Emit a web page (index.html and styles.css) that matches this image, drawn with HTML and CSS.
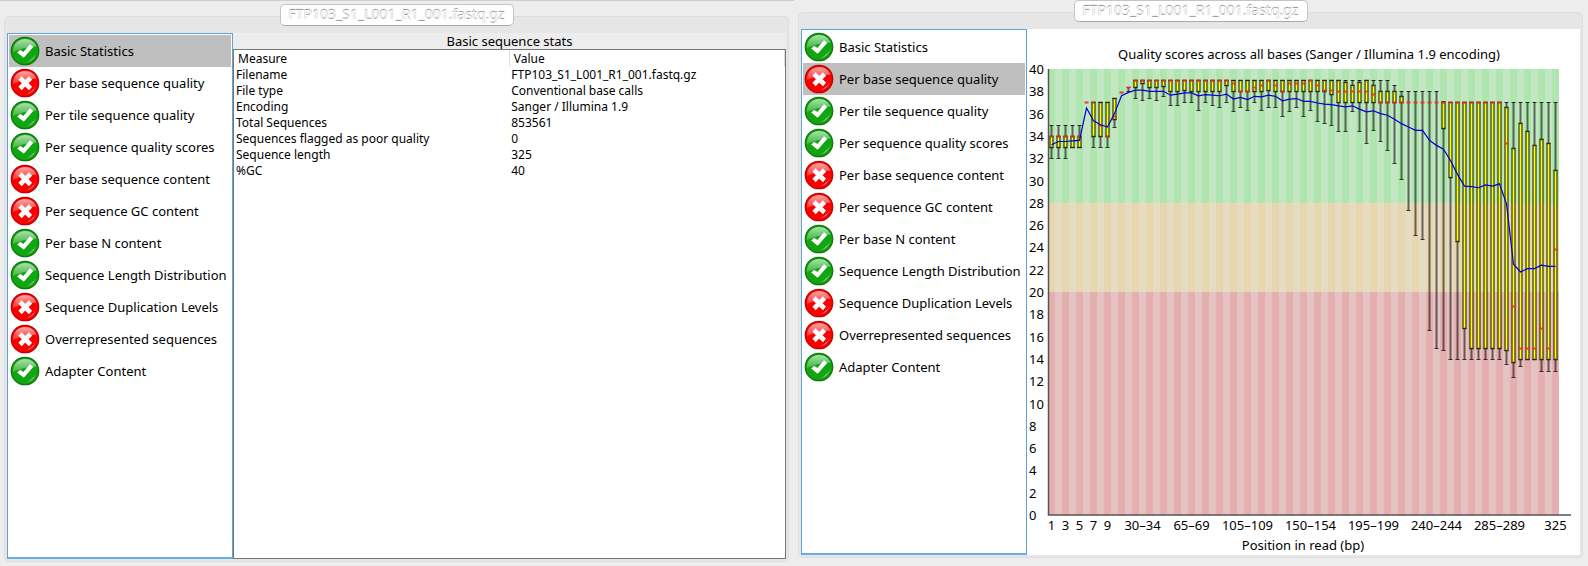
FILE: index.html
```html
<!DOCTYPE html>
<html lang="en">
<head>
<meta charset="utf-8">
<title>FastQC</title>
<link rel="stylesheet" href="styles.css">
</head>
<body>
<svg class="defs" aria-hidden="true">
  <defs>
    <linearGradient id="gloss" x1="0" y1="0" x2="0" y2="1">
      <stop offset="0" stop-color="#fff" stop-opacity=".65"/>
      <stop offset="1" stop-color="#fff" stop-opacity=".2"/>
    </linearGradient>
    <symbol id="pass" viewBox="0 0 30 30">
      <circle cx="15" cy="15" r="13.7" fill="#12a512" stroke="#0c790c" stroke-width="1.3"/>
      <path d="M3 16C3 8 8 3 15 3c6 0 10 3.500 11.500 7.500C17 11 9 13 3 16Z" fill="url(#gloss)"/>
      <path d="M25.700 18c-1.200 4.500-4.500 7.500-9.500 8.200 4.500-1.800 7.500-4.400 9.500-8.200Z" fill="#fff" opacity=".55"/>
      <path d="M7.200 16.500l3-2.800 3.200 2.300 6.600-7.800 3.200 2.700-9.500 10.900Z" fill="#fff"/>
    </symbol>
    <symbol id="fail" viewBox="0 0 30 30">
      <circle cx="15" cy="15" r="13.700" fill="#fb0000" stroke="#c80000" stroke-width="1.300"/>
      <path d="M3 16C3 8 8 3 15 3c6 0 10 3.500 11.500 7.500C17 11 9 13 3 16Z" fill="url(#gloss)"/>
      <path d="M25.700 18c-1.200 4.500-4.500 7.500-9.500 8.200 4.500-1.800 7.500-4.400 9.500-8.200Z" fill="#fff" opacity=".55"/>
      <path d="M10 10l10.500 10.500M20.500 10L10 20.500" stroke="#fff" stroke-width="4.600"/>
    </symbol>
  </defs>
</svg>
<main class="workspace">
  <section class="report">
    <h1 class="tab">FTP103_S1_L001_R1_001.fastq.gz</h1>
    <div class="panes">
      <ul class="modules">
        <li><button class="module selected"><svg><use href="#pass"/></svg>Basic Statistics</button></li>
        <li><button class="module"><svg><use href="#fail"/></svg>Per base sequence quality</button></li>
        <li><button class="module"><svg><use href="#pass"/></svg>Per tile sequence quality</button></li>
        <li><button class="module"><svg><use href="#pass"/></svg>Per sequence quality scores</button></li>
        <li><button class="module"><svg><use href="#fail"/></svg>Per base sequence content</button></li>
        <li><button class="module"><svg><use href="#fail"/></svg>Per sequence GC content</button></li>
        <li><button class="module"><svg><use href="#pass"/></svg>Per base N content</button></li>
        <li><button class="module"><svg><use href="#pass"/></svg>Sequence Length Distribution</button></li>
        <li><button class="module"><svg><use href="#fail"/></svg>Sequence Duplication Levels</button></li>
        <li><button class="module"><svg><use href="#fail"/></svg>Overrepresented sequences</button></li>
        <li><button class="module"><svg><use href="#pass"/></svg>Adapter Content</button></li>
      </ul>
      <div class="stats">
        <h2 class="stats-title">Basic sequence stats</h2>
        <div class="stats-body">
          <table class="stats-table">
            <thead><tr><th>Measure</th><th>Value</th></tr></thead>
            <tbody>
              <tr><td>Filename</td><td>FTP103_S1_L001_R1_001.fastq.gz</td></tr>
              <tr><td>File type</td><td>Conventional base calls</td></tr>
              <tr><td>Encoding</td><td>Sanger / Illumina 1.9</td></tr>
              <tr><td>Total Sequences</td><td>853561</td></tr>
              <tr><td>Sequences flagged as poor quality</td><td>0</td></tr>
              <tr><td>Sequence length</td><td>325</td></tr>
              <tr><td>%GC</td><td>40</td></tr>
            </tbody>
          </table>
        </div>
      </div>
    </div>
  </section>
  <section class="report raised">
    <h1 class="tab">FTP103_S1_L001_R1_001.fastq.gz</h1>
    <div class="panes">
      <ul class="modules">
        <li><button class="module"><svg><use href="#pass"/></svg>Basic Statistics</button></li>
        <li><button class="module selected"><svg><use href="#fail"/></svg>Per base sequence quality</button></li>
        <li><button class="module"><svg><use href="#pass"/></svg>Per tile sequence quality</button></li>
        <li><button class="module"><svg><use href="#pass"/></svg>Per sequence quality scores</button></li>
        <li><button class="module"><svg><use href="#fail"/></svg>Per base sequence content</button></li>
        <li><button class="module"><svg><use href="#fail"/></svg>Per sequence GC content</button></li>
        <li><button class="module"><svg><use href="#pass"/></svg>Per base N content</button></li>
        <li><button class="module"><svg><use href="#pass"/></svg>Sequence Length Distribution</button></li>
        <li><button class="module"><svg><use href="#fail"/></svg>Sequence Duplication Levels</button></li>
        <li><button class="module"><svg><use href="#fail"/></svg>Overrepresented sequences</button></li>
        <li><button class="module"><svg><use href="#pass"/></svg>Adapter Content</button></li>
      </ul>
      <div class="chart">
        <svg id="quality" class="plot" viewBox="0 0 553 526" preserveAspectRatio="xMinYMin meet" role="img" aria-label="Quality scores across all bases"></svg>
      </div>
    </div>
  </section>
</main>
<script src="chart.js"></script>
</body>
</html>
```
FILE: styles.css
```css
* { box-sizing: border-box; }
body {
  margin: 0;
  background: #ededed;
  color: #000;
  font-family: "Noto Sans", "Open Sans", sans-serif;
  font-size: 13px;
}
.defs { position: absolute; width: 0; height: 0; }
.workspace {
  display: flex;
  gap: 9px;
  min-height: 100vh;
  padding: 16px 5px 5px 4px;
  background: linear-gradient(#cfcfcf, #cfcfcf) no-repeat 0 0 / 50% 1px;
}
.report {
  position: relative;
  flex: 1;
  display: flex;
  min-width: 0;
  padding: 16px 2px 2px;
  background: #e6e6e6;
  border: 1px solid #dedede;
  border-radius: 5px;
}
.raised { margin: -4px 0 4px; }
.tab {
  position: absolute;
  top: -13px;
  left: 50%;
  transform: translateX(-50%);
  margin: 0;
  width: 234px;
  height: 22px;
  background: #fff;
  border: 1px solid #c4c4c4;
  border-bottom-color: #aaa;
  border-radius: 5px;
  color: #fff;
  font-size: 14px;
  font-weight: 400;
  line-height: 20px;
  text-align: center;
  text-shadow: 0 -1px 1px #888;
  white-space: nowrap;
}
.panes { flex: 1; display: flex; min-width: 0; }
.modules {
  flex: none;
  width: 226px;
  margin: 0;
  padding: 1px;
  list-style: none;
  background: #fff;
  border: 1px solid #5ca4dd;
  border-bottom: 2px solid #62aeee;
}
.module {
  display: flex;
  align-items: center;
  gap: 5px;
  width: 100%;
  height: 32px;
  padding: 0 0 0 1px;
  border: 0;
  background: none;
  color: inherit;
  font: inherit;
  white-space: nowrap;
}
.module svg { flex: none; width: 30px; height: 30px; }
.selected { background: #bfbfbf; }
.stats { flex: 1; display: flex; flex-direction: column; min-width: 0; }
.stats-title {
  margin: 0;
  background: #ededed;
  font-size: 13px;
  font-weight: 400;
  line-height: 16px;
  text-align: center;
}
.stats-body { flex: 1; background: #fff; border: 1px solid #777; }
.stats-table {
  width: 100%;
  border-collapse: collapse;
  table-layout: fixed;
  font-size: 12px;
  line-height: 16px;
}
.stats-table th { height: 17px; padding: 0 4px; font-weight: 400; text-align: left; }
.stats-table th + th { border-left: 1px solid #ddd; border-right: 1px solid #ddd; }
.stats-table td { padding: 0 2px; }
.chart { flex: 1; min-width: 0; background: #fff; }
.plot { display: block; width: 100%; height: auto; font-size: 13px; }
.plot text { fill: #000; }
.middle { text-anchor: middle; }
```
FILE: chart.js
```js
// Per column: upper whisker, upper quartile, median, lower quartile, lower whisker, mean.
const data = [
  [35,34,34,33,32,33.2],[35,34,34,33,32,33.5],[35,34,34,33,32,33.5],[35,34,34,33,33,33.55],[35,34,34,33,33,33.6],
  [37,37,37,37,37,36.5],[37,37,37,34,33,35.35],[37,37,35,34,33,35],[37,37,34,34,33,34.8],[37.4,37.4,35.8,35.5,34.8,36],
  [37.9,37.9,37.9,37.9,37.9,37.6],[38.4,38.4,38.4,38.4,38,37.9],[39,39,39,38.4,37.4,38.1],[39,39,39,38.75,37.2,38.1],
  [39,39,39,38.4,37.4,38],[39,39,39,38.4,37.2,38],[39,39,39,38.5,37.6,38],[39,39,39,38,36.8,37.65],[39,39,39,38,36.8,37.75],
  [39,39,39,38.1,37,37.85],[39,39,39,38,37,37.85],[39,39,39,38,36.35,37.6],[39,39,39,38,37,37.7],[39,39,39,38,36.8,37.65],
  [39,39,39,38,36.6,37.6],[39,39,39,38.6,37,37.75],[39,39,38.75,38,36.2,37.3],[39,39,38,38,36.6,37.45],[39,39,38,38,36.35,37.25],
  [39,39,38.4,38,37,37.55],[39,39,38.6,38,36.35,37.5],[39,39,39,38.1,36.6,37.65],[39,39,38.6,38,36.6,37.55],[39,39,38,38,35.8,37.15],
  [39,39,38.75,38,36.2,37.3],[39,39,38.75,38,36.6,37.35],[39,39,38.75,38,35.8,37.1],[39,39,39,38,36.35,37.1],[39,39,38.6,38,35.3,36.95],
  [39,39,38.1,38,35.2,36.85],[39,39,38.1,37.8,35,36.8],[39,39,38,37,34.4,36.7],[39,38.8,38,37,34.4,36.6],[39,38.6,38,37,36.2,36.7],
  [39,38.8,38,37,34.4,36.4],[39,39,38,37,33.4,36.15],[39,38.6,37.8,37,34.55,36.25],[39,38,37,37,33.55,36],[39,38,37,37,32.75,35.85],
  [38.6,38,37,37,31.6,35.5],[38,37.6,37,37,30.15,35.1],[38,37,37,37,27.35,34.8],[38,37,37,37,25.1,34.5],[38,37,37,37,24.75,34.5],
  [38,37,37,37,16.6,33.6],[38,37,37,37,15,33.15],[37.15,37,37,34.75,14.8,32.8],[37,37,37,30.3,14,31.8],[37,37,37,24.55,14,30.55],
  [37,37,37,16.75,14,29.5],[37,37,37,15,14,29.45],[37,37,37,15,14,29.35],[37,37,37,15,14,29.6],[37,37,37,15,14,29.5],
  [37,37,37,15,14,29.7],[37,36.6,33.4,14.8,13.55,27.9],[37,32.9,18.7,13.7,12.35,22.5],[37,35.2,15,14,13.35,21.8],
  [37,34.4,15,14,14,22.1],[37,33.2,15,14,14,22.1],[37,33.7,16.8,14,12.9,22.4],[37,33.4,15,14,12.9,22.3],[37,30.9,23.9,14,12.9,22.3]
];
const NS = "http://www.w3.org/2000/svg";
const plot = document.getElementById("quality");
const left = 21, ceiling = 40, bottom = 486, col = 7;
const unit = (bottom - ceiling) / 40;
const y = v => Math.round(bottom - v * unit);
const cx = i => left + col * i + 3.5;

function add(name, attrs, text) {
  const el = document.createElementNS(NS, name);
  for (const key in attrs) el.setAttribute(key, attrs[key]);
  if (text !== undefined) el.textContent = text;
  plot.append(el);
}

const bands = [[40, 28, "#afe6af", "#c3e6c3"], [28, 20, "#e6d7af", "#e6dcc3"], [20, 0, "#e6afaf", "#e6c3c3"]];
for (const [hi, lo, even, odd] of bands) {
  data.forEach((_, i) => {
    add("rect", {
      x: left + col * i, y: y(hi), width: col, height: y(lo) - y(hi),
      fill: i % 2 ? odd : even, "shape-rendering": "crispEdges"
    });
  });
}

data.forEach(([hi, q3, med, q1, lo], i) => {
  const c = cx(i);
  if (hi > lo) {
    add("path", { d: `M${c} ${y(hi)}V${y(q3)}M${c} ${y(q1)}V${y(lo)}`, stroke: "#000", "stroke-width": 2, opacity: .55 });
    add("path", { d: `M${c - 2} ${y(hi) + .5}h4M${c - 2} ${y(lo) + .5}h4`, stroke: "#000", opacity: .75 });
  }
  if (q3 > q1) {
    const height = y(q1) - y(q3);
    add("rect", { x: c - 1.5, y: y(q3) + .5, width: 3, height, fill: "#ffff00", stroke: "#000", "stroke-width": 1.7, "stroke-opacity": .55 });
    add("path", { d: `M${c - 2} ${y(q3) + .5}h4m-4 ${height}h4`, stroke: "#1e1e00", opacity: .7 });
  }
  add("path", { d: `M${c - 2} ${y(med) + .5}h4`, stroke: "#e6321e", "stroke-width": 2, opacity: .9 });
});

add("polyline", {
  points: data.map((d, i) => `${cx(i)},${bottom - d[5] * unit}`).join(" "),
  fill: "none", stroke: "#0000d2", "stroke-width": 1.2
});

add("path", { d: `M21.500 ${ceiling}V486H544`, fill: "none", stroke: "#555", "stroke-width": 1.5 });
for (let v = 0; v <= 40; v += 2) add("text", { x: 2, y: y(v) + 5 }, v);
const labels = { 0: "1", 2: "3", 4: "5", 6: "7", 8: "9", 13: "30–34", 20: "65–69", 28: "105–109", 37: "150–154", 46: "195–199", 55: "240–244", 64: "285–289", 72: "325" };
for (const i in labels) add("text", { x: cx(+i), y: 501, class: "middle" }, labels[i]);
add("text", { x: 282, y: 30, class: "middle" }, "Quality scores across all bases (Sanger / Illumina 1.9 encoding)");
add("text", { x: 276, y: 521, class: "middle" }, "Position in read (bp)");
```
